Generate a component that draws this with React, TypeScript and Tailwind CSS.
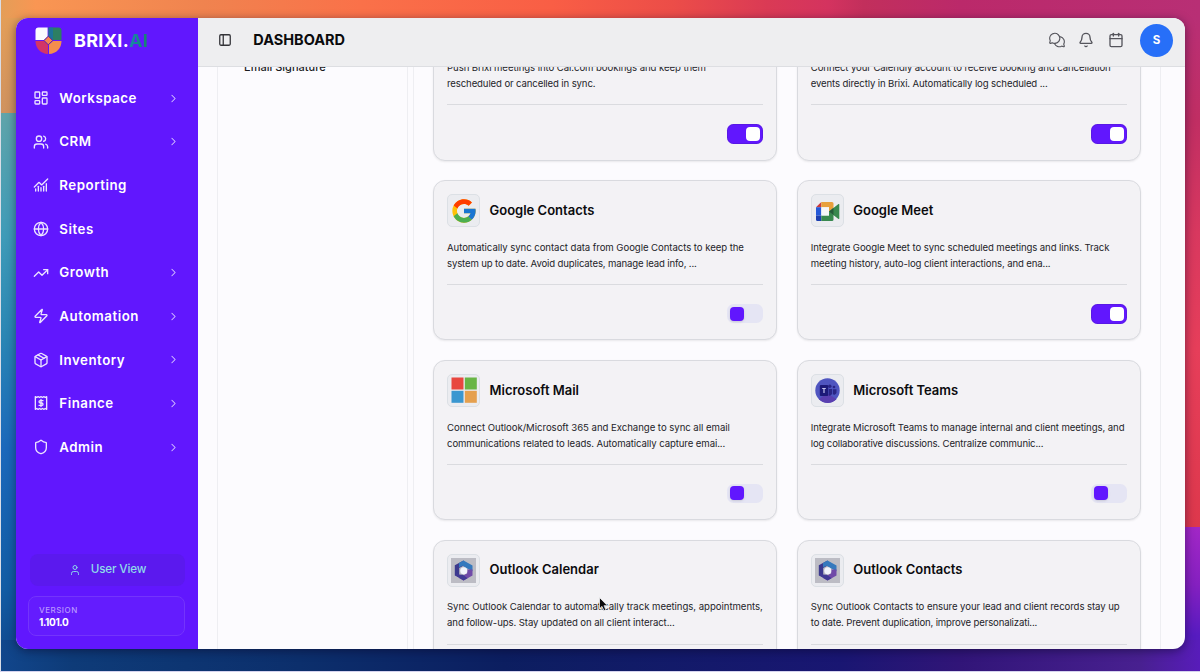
import type { ReactNode } from "react";
import {
  Bell,
  Calendar,
  ChartNoAxesCombined,
  ChevronRight,
  Globe,
  LayoutDashboard,
  Package,
  PanelLeft,
  Shield,
  TrendingUp,
  User,
  Users,
  Zap,
} from "lucide-react";
import { FcGoogle } from "react-icons/fc";
import { PiChatsCircle } from "react-icons/pi";

function Wallpaper() {
  return (
    <svg className="absolute inset-0 h-full w-full" viewBox="0 0 1200 672" preserveAspectRatio="none">
      <defs>
        <linearGradient id="top" x1="0" x2="1" y1="0" y2="0">
          <stop offset="0" stopColor="#e39e58" />
          <stop offset="0.03" stopColor="#f99653" />
          <stop offset="0.17" stopColor="#f0834f" />
          <stop offset="0.3" stopColor="#fa7149" />
          <stop offset="0.46" stopColor="#f95e45" />
          <stop offset="0.56" stopColor="#ec4d48" />
          <stop offset="0.64" stopColor="#da3a55" />
          <stop offset="0.69" stopColor="#d4335f" />
          <stop offset="0.72" stopColor="#c22f5c" />
          <stop offset="0.8" stopColor="#bb296a" />
          <stop offset="1" stopColor="#b82f75" />
        </linearGradient>
        <linearGradient id="left" x1="0" x2="0" y1="0" y2="1">
          <stop offset="0" stopColor="#5fa4aa" />
          <stop offset="0.22" stopColor="#3f9bb8" />
          <stop offset="0.4" stopColor="#2a86b4" />
          <stop offset="0.6" stopColor="#1b68bb" />
          <stop offset="0.85" stopColor="#125ca4" />
          <stop offset="1" stopColor="#11458a" />
        </linearGradient>
        <linearGradient id="leftTop" x1="0" x2="0" y1="0" y2="1">
          <stop offset="0" stopColor="#e39e58" />
          <stop offset="1" stopColor="#cf925f" />
        </linearGradient>
        <linearGradient id="right" x1="0" x2="0" y1="0" y2="1">
          <stop offset="0" stopColor="#b82f75" />
          <stop offset="0.2" stopColor="#c02e63" />
          <stop offset="0.42" stopColor="#d8385f" />
          <stop offset="0.65" stopColor="#e63e5a" />
          <stop offset="1" stopColor="#dd384c" />
        </linearGradient>
        <linearGradient id="rightLow" x1="0" x2="0" y1="0" y2="1">
          <stop offset="0" stopColor="#a127c6" />
          <stop offset="0.4" stopColor="#8420c0" />
          <stop offset="0.75" stopColor="#561bc0" />
          <stop offset="1" stopColor="#581cba" />
        </linearGradient>
        <linearGradient id="bottom" x1="0" x2="1" y1="0" y2="0">
          <stop offset="0" stopColor="#11468c" />
          <stop offset="0.06" stopColor="#0e3b78" />
          <stop offset="0.25" stopColor="#0c2f6c" />
          <stop offset="0.42" stopColor="#0c1e60" />
          <stop offset="0.7" stopColor="#191672" />
          <stop offset="0.8" stopColor="#311578" />
          <stop offset="0.95" stopColor="#482090" />
          <stop offset="1" stopColor="#581cba" />
        </linearGradient>
      </defs>
      <rect width="1200" height="40" fill="url(#top)" />
      <rect y="18" width="40" height="95" fill="url(#leftTop)" />
      <rect y="113" width="40" height="559" fill="url(#left)" />
      <rect x="1160" y="18" width="40" height="509" fill="url(#right)" />
      <rect x="1160" y="527" width="40" height="145" fill="url(#rightLow)" />
      <rect y="640" width="1200" height="32" fill="url(#bottom)" />
      <rect width="1" height="672" fill="#d9dde6" />
      <rect y="671" width="1200" height="1" fill="#d5d3ee" />
    </svg>
  );
}

function BrixiLogo() {
  return (
    <svg width="27" height="28" viewBox="0 0 27 28">
      <path d="M3.5 0.5H12.6v9L9 13H0.5V3.500a3 3 0 0 1 3-3z" fill="#fbfaff" />
      <path d="M13.600 0.500h9.900a3 3 0 0 1 3 3V13H18l-4.400-3.500z" fill="#2d7f62" />
      <path d="M13.600 0.500h4.400v12.500l-4.400-3.500z" fill="#1d729c" />
      <path d="M0.500 14H9l4 3.500v9.500C5.500 26.800 0.500 21 0.500 14z" fill="#d23567" />
      <path d="M26.500 14H18l-4 3.500v9.500c7.500-0.200 12.500-6 12.500-13z" fill="#f58d4d" />
      <path d="M13.300 9.200l4.300 4.300-4.300 4.300-4.300-4.300z" fill="#f58452" stroke="#6a2a90" strokeWidth="1" />
    </svg>
  );
}

function ReceiptDollar() {
  return (
    <svg width="16" height="16" viewBox="0 0 24 24" fill="none" stroke="currentColor" strokeWidth="2" strokeLinejoin="round" strokeLinecap="round">
      <path d="M3.500 2.500v19l2.100-1.200 2.100 1.200 2.200-1.200 2.100 1.200 2.100-1.200 2.200 1.200 2.100-1.200 2.100 1.200v-19l-2.100 1.200-2.100-1.200-2.200 1.200L12 2.500 9.900 3.700 7.700 2.500 5.600 3.700z" />
      <path d="M15 8.500h-4.200a1.700 1.700 0 0 0 0 3.500h2.400a1.700 1.700 0 0 1 0 3.500H9M12 6.800v10.400" />
    </svg>
  );
}

function MeetLogo() {
  return (
    <svg width="25" height="24" viewBox="0 0 25 24">
      <path d="M1 8.300L6.300 3v5.300z" fill="#c93a3f" />
      <path d="M6.300 3H17a1.500 1.500 0 0 1 1.500 1.500V9L14 12.500V8.300H6.300z" fill="#e8a03c" />
      <path d="M1 8.300h5.300v8.200H1z" fill="#2459d8" />
      <path d="M1 16.500h5.300V22H2.500A1.500 1.500 0 0 1 1 20.500z" fill="#1c3fb0" />
      <path d="M6.300 16.500H14v-4l4.500 3.500v4.500A1.500 1.500 0 0 1 17 22H6.300z" fill="#38894f" />
      <path d="M6.300 8.300H14v8.200H6.300z" fill="#f6f6f8" />
      <path d="M14 12.500L23.500 5a.5.5 0 0 1 .8.400v14.200a.5.5 0 0 1-.8.400L14 12.800z" fill="#38894f" />
      <path d="M14 12.500L18.500 8.700v7.600z" fill="#245c3a" />
    </svg>
  );
}

function MicrosoftLogo() {
  return (
    <svg width="26" height="26" viewBox="0 0 26 26">
      <path d="M0.500 0.500h12v12h-12z" fill="#e8473f" />
      <path d="M13.800 0.500h12v12h-12z" fill="#68b545" />
      <path d="M0.500 13.800h12v12h-12z" fill="#3a97d0" />
      <path d="M13.800 13.800h12v12h-12z" fill="#e5a04e" />
    </svg>
  );
}

function TeamsLogo() {
  return (
    <svg width="25" height="25" viewBox="0 0 25 25">
      <circle cx="12.500" cy="12.500" r="12.200" fill="#4f55c0" />
      <path d="M4 21.200a12.200 12.200 0 0 0 17.500 0L12 15z" fill="#5a3fb0" />
      <circle cx="14.800" cy="8.300" r="1.700" fill="#2a2585" />
      <circle cx="19" cy="9" r="1.300" fill="#2a2585" />
      <path d="M13.800 11h3.200v5a3.200 3.200 0 0 1-3.200 1.800zM17.800 11.300h3.700v3.500a2.400 2.400 0 0 1-3.700 1.400z" fill="#2a2585" />
      <rect x="4.800" y="7" width="8.400" height="11" rx="1" fill="#1d1a78" />
      <path d="M7.200 10.500h3.600M9 10.500v4.500" stroke="#c5c3ee" strokeWidth="1.200" />
    </svg>
  );
}

function Microsoft365Logo() {
  return (
    <svg width="25" height="25" viewBox="0 0 25 25">
      <rect width="25" height="25" fill="#bcbcc4" />
      <path d="M12.500 2.500L3.800 7.300v10l4.400 2.300V10l6.500-3.500z" fill="#3c3a8e" />
      <path d="M12.500 2.500l9 5v5.800l-5.200-2.800-4.800-2.800L8 9.500V5z" fill="#3579bd" />
      <path d="M21.500 11.500v6l-9 5L8 20l8.200-4.800v-3.700z" fill="#704aa8" />
      <path d="M3.800 17.300l8.700 5.200 4-2.300-4.500-3.500-4-.3-2-1.500z" fill="#413a94" />
      <circle cx="12.800" cy="12.700" r="3.500" fill="#f1f3fb" />
    </svg>
  );
}

const navItems: { label: string; icon: ReactNode; expandable: boolean }[] = [
  { label: "Workspace", icon: <LayoutDashboard size={16} strokeWidth={2} />, expandable: true },
  { label: "CRM", icon: <Users size={16} strokeWidth={2} />, expandable: true },
  { label: "Reporting", icon: <ChartNoAxesCombined size={16} strokeWidth={2} />, expandable: false },
  { label: "Sites", icon: <Globe size={16} strokeWidth={2} />, expandable: false },
  { label: "Growth", icon: <TrendingUp size={16} strokeWidth={2} />, expandable: true },
  { label: "Automation", icon: <Zap size={16} strokeWidth={2} />, expandable: true },
  { label: "Inventory", icon: <Package size={16} strokeWidth={2} />, expandable: true },
  { label: "Finance", icon: <ReceiptDollar />, expandable: true },
  { label: "Admin", icon: <Shield size={16} strokeWidth={2} />, expandable: true },
];

function Sidebar() {
  return (
    <aside className="flex w-[182px] shrink-0 flex-col bg-[#6117fe] text-white">
      <div className="flex h-[44px] items-center pt-px pl-[19px]">
        <BrixiLogo />
        <span className="ml-3 text-[18px] font-bold tracking-[0.3px]">
          BRIXI.
          <span className="bg-linear-to-r from-[#1c86ae] to-[#16836a] bg-clip-text text-transparent">AI</span>
        </span>
      </div>
      <nav className="mt-[14.200px] flex flex-col">
        {navItems.map((item) => (
          <div key={item.label} className="flex h-[43.650px] items-center pr-[18px] pl-[17px]">
            <span className="flex w-[16px] text-[#ece4ff]">{item.icon}</span>
            <span className="ml-[10.300px] flex-1 pt-[1.500px] text-[13.300px] font-semibold tracking-[0.520px]">{item.label}</span>
            {item.expandable && <ChevronRight size={13} strokeWidth={1.900} className="text-[#d8c8ff]" />}
          </div>
        ))}
      </nav>
      <div className="mt-auto pr-[13px] pb-[12.500px] pl-[12px]">
        <div className="ml-[2px] flex h-[32px] items-center justify-center rounded-lg bg-[#5b19ee] text-[#8fdcea]">
          <User size={12} strokeWidth={1.900} />
          <span className="ml-2.5 text-[11.700px] font-medium tracking-[-0.150px]">User View</span>
        </div>
        <div className="mt-[10px] flex h-[40px] flex-col justify-center rounded-lg border border-[#7434fb] bg-[#641cfe] pl-[10px]">
          <span className="text-[8px] leading-[12px] font-medium tracking-[0.500px] text-[#b897ff]">VERSION</span>
          <span className="text-[10px] leading-[13px] font-bold tracking-[-0.350px]">1.101.0</span>
        </div>
      </div>
    </aside>
  );
}

function Header() {
  return (
    <header className="flex h-[48.500px] shrink-0 items-center border-b border-[#dddee2] bg-[#eeeef0] pr-[12px] pb-[3px] pl-[20px] text-[#55555c]">
      <PanelLeft size={14} strokeWidth={2.200} className="text-[#333338]" />
      <h1 className="ml-[21.300px] flex-1 text-[14.500px] font-bold text-[#0a0a0c]">DASHBOARD</h1>
      <PiChatsCircle size={18} />
      <Bell size={16} strokeWidth={2} className="ml-[12px]" />
      <Calendar size={16} strokeWidth={2} className="ml-[13.500px]" />
      <span className="ml-[16.500px] flex size-[33px] items-center justify-center rounded-full bg-[#276ff8] text-[11.500px] font-bold text-white">
        S
      </span>
    </header>
  );
}

function Toggle({ on }: { on: boolean }) {
  return on ? (
    <span className="flex h-[20px] w-[36px] items-center justify-end rounded-[6.500px] bg-[#6117fe] pr-[3px] ring-1 ring-[#4a1bc0]/40 ring-inset">
      <span className="size-[14px] rounded-[4px] bg-white" />
    </span>
  ) : (
    <span className="flex h-[19px] w-[36px] items-center rounded-[6.500px] bg-[#e5e5f4] pl-[3px]">
      <span className="size-[14px] rounded-[4px] bg-[#6117fe] shadow-sm" />
    </span>
  );
}

type Integration = { name: string; logo?: ReactNode; on: boolean; lines: ReactNode };

const integrations: Integration[] = [
  {
    name: "Cal.com",
    on: true,
    lines: (
      <>
        <p className="tracking-[-0.075px]">Push Brixi meetings into Cal.com bookings and keep them</p>
        <p className="tracking-[-0.125px]">rescheduled or cancelled in sync.</p>
      </>
    ),
  },
  {
    name: "Calendly",
    on: true,
    lines: (
      <>
        <p className="tracking-[-0.1px]">Connect your Calendly account to receive booking and cancellation</p>
        <p className="tracking-[-0.125px]">events directly in Brixi. Automatically log scheduled ...</p>
      </>
    ),
  },
  {
    name: "Google Contacts",
    logo: <FcGoogle size={28} />,
    on: false,
    lines: (
      <>
        <p className="tracking-[-0.06px]">Automatically sync contact data from Google Contacts to keep the</p>
        <p className="tracking-[-0.145px]">system up to date. Avoid duplicates, manage lead info, ...</p>
      </>
    ),
  },
  {
    name: "Google Meet",
    logo: <MeetLogo />,
    on: true,
    lines: (
      <>
        <p className="tracking-[-0.1px]">Integrate Google Meet to sync scheduled meetings and links. Track</p>
        <p className="tracking-[-0.12px]">meeting history, auto-log client interactions, and ena...</p>
      </>
    ),
  },
  {
    name: "Microsoft Mail",
    logo: <MicrosoftLogo />,
    on: false,
    lines: (
      <>
        <p className="tracking-[-0.037px]">Connect Outlook/Microsoft 365 and Exchange to sync all email</p>
        <p className="tracking-[-0.095px]">communications related to leads. Automatically capture emai...</p>
      </>
    ),
  },
  {
    name: "Microsoft Teams",
    logo: <TeamsLogo />,
    on: false,
    lines: (
      <>
        <p className="tracking-[-0.08px]">Integrate Microsoft Teams to manage internal and client meetings, and</p>
        <p className="tracking-[-0.147px]">log collaborative discussions. Centralize communic...</p>
      </>
    ),
  },
  {
    name: "Outlook Calendar",
    logo: <Microsoft365Logo />,
    on: false,
    lines: (
      <>
        <p className="tracking-[-0.04px]">Sync Outlook Calendar to automatically track meetings, appointments,</p>
        <p className="tracking-[-0.09px]">and follow-ups. Stay updated on all client interact...</p>
      </>
    ),
  },
  {
    name: "Outlook Contacts",
    logo: <Microsoft365Logo />,
    on: false,
    lines: (
      <>
        <p className="tracking-[-0.078px]">Sync Outlook Contacts to ensure your lead and client records stay up</p>
        <p className="tracking-[-0.153px]">to date. Prevent duplication, improve personalizati...</p>
      </>
    ),
  },
];

function IntegrationCard({ name, logo, on, lines }: Integration) {
  return (
    <article className="flex h-[160.300px] flex-col rounded-xl border border-[#d9dadf] bg-[#f3f2f5] px-[13px] pt-[13px] shadow-[0_1px_2px_rgba(0,0,0,0.08)]">
      <div className="flex h-[33px] shrink-0 items-center">
        {logo && (
          <>
            <span className="flex size-[33px] items-center justify-center rounded-[5px] border border-[#dce0e5] bg-[#ebecf0]">
              {logo}
            </span>
            <h2 className="ml-[9.500px] text-[13px] font-semibold text-[#0b0b0e]">{name}</h2>
          </>
        )}
      </div>
      <div className="mt-[12.800px] text-[9.600px] leading-[16px] whitespace-nowrap text-[#242429]">{lines}</div>
      <div className="mt-[12.400px] flex items-center justify-end border-t border-[#dadbdf] pt-[19px]">
        <Toggle on={on} />
      </div>
    </article>
  );
}

export default function App() {
  return (
    <div className="relative h-[672px] w-[1200px] overflow-hidden pt-[18px] pl-[16px] font-['Inter',sans-serif]">
      <Wallpaper />
      <div className="relative flex h-[630.500px] w-[1169px] overflow-hidden rounded-[12px] bg-[#fcfbfe] shadow-[0_2px_10px_rgba(10,5,40,0.5)]">
        <Sidebar />
        <div className="flex min-w-0 flex-1 flex-col">
          <Header />
          <main className="flex min-h-0 flex-1 overflow-hidden pl-[19px]">
            <section className="w-[191px] shrink-0 border-x border-[#eeeef2] pl-[26px]">
              <p className="-mt-[8px] text-[11px] leading-[16px] font-medium tracking-[0.010px] text-[#1b1b1f]">Email Signature</p>
            </section>
            <section className="ml-[5px] h-[800px] w-[748px] shrink-0 border-x border-[#eeeef2] px-[19px]">
              <div className="-mt-[66.300px] grid grid-cols-2 gap-x-[19.500px] gap-y-[19.500px]">
                {integrations.map((item) => (
                  <IntegrationCard key={item.name} {...item} />
                ))}
              </div>
            </section>
          </main>
        </div>
      </div>
      <svg className="absolute top-[596px] left-[598px]" width="11" height="17" viewBox="0 0 11 17">
        <path d="M1.500 1.500v11.300l2.500-2.400 1.900 4.300 2-.9-1.900-4.100h3.500z" fill="#0c0c0e" stroke="#f3f2f5" strokeWidth="0.800" />
      </svg>
    </div>
  );
}
